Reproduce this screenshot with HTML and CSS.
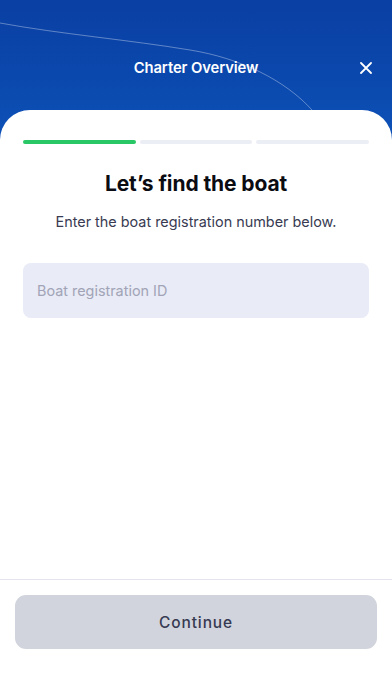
FILE: index.html
```html
<!DOCTYPE html>
<html>
<head>
<meta charset="utf-8">
<link rel="stylesheet" href="styles.css">
</head>
<body>
<div class="screen">
  <header class="header">
    <svg class="curve" width="392" height="140" viewBox="0 0 392 140">
      <path d="M0 23 C60 34 130 40 190 50 C240 58 285 80 312 110" fill="none" stroke="rgba(255,255,255,0.35)" stroke-width="1"/>
    </svg>
    <div class="topbar">
      <span class="top-title">Charter Overview</span>
      <button class="close" aria-label="Close">
        <svg width="12" height="12" viewBox="0 0 12 12"><path d="M1 1 L11 11 M11 1 L1 11" stroke="#fff" stroke-width="1.8" stroke-linecap="round"/></svg>
      </button>
    </div>
  </header>
  <main class="card">
    <div class="progress">
      <span class="seg done"></span>
      <span class="seg"></span>
      <span class="seg"></span>
    </div>
    <h1 class="title">Let’s find the boat</h1>
    <p class="subtitle">Enter the boat registration number below.</p>
    <div class="input">Boat registration ID</div>
  </main>
  <footer class="footer">
    <button class="continue">Continue</button>
  </footer>
</div>
</body>
</html>
```
FILE: styles.css
```css
* { box-sizing: border-box; }
html, body { margin: 0; padding: 0; }
body {
  width: 392px;
  height: 696px;
  background: #ffffff;
  font-family: Inter, "Noto Sans", sans-serif;
  overflow: hidden;
}
.screen {
  display: flex;
  flex-direction: column;
  height: 696px;
  position: relative;
}
.header {
  position: relative;
  height: 140px;
  margin-bottom: -30px;
  background: linear-gradient(180deg, #0a3fa3 0%, #0b49ae 60%, #0d52b8 100%);
  overflow: hidden;
}
.curve { position: absolute; left: 0; top: 0; }
.topbar {
  position: relative;
  height: 136px;
  padding-top: 57px;
  display: flex;
  justify-content: center;
}
.top-title {
  color: #ffffff;
  font-size: 14.8px;
  font-weight: 600;
  letter-spacing: -0.1px;
  line-height: 22px;
}
.close {
  position: absolute;
  right: 20px;
  top: 62px;
  width: 12px;
  height: 12px;
  padding: 0;
  border: 0;
  background: none;
  display: flex;
}
.card {
  position: relative;
  flex: 1;
  background: #ffffff;
  border-radius: 30px 30px 0 0;
  padding: 30px 23px 0;
  display: flex;
  flex-direction: column;
  align-items: stretch;
}
.progress {
  display: flex;
  gap: 4px;
}
.seg {
  flex: 1;
  height: 4px;
  border-radius: 2px;
  background: #eceef6;
}
.seg.done { background: #2ac766; }
.title {
  margin: 27px 0 0;
  text-align: center;
  font-family: Inter, sans-serif;
  font-size: 21px;
  font-weight: 700;
  color: #0b0b12;
  line-height: 26px;
  letter-spacing: -0.1px;
}
.subtitle {
  margin: 15px 0 0;
  text-align: center;
  font-size: 14.4px;
  color: #383b52;
  line-height: 20px;
}
.input {
  margin-top: 31px;
  height: 55px;
  border-radius: 8px;
  background: #e9ebf6;
  padding: 0 14px;
  display: flex;
  align-items: center;
  font-size: 14.4px;
  color: #a1a4b6;
}
.footer {
  border-top: 1px solid #e4e4ec;
  padding: 15px 15px 47px;
}
.continue {
  display: block;
  width: 100%;
  height: 54px;
  border: 0;
  border-radius: 11px;
  background: #d1d4dc;
  font-family: Inter, sans-serif;
  font-size: 15.5px;
  font-weight: 500;
  color: #363a52;
  letter-spacing: 0.9px;
}
```
